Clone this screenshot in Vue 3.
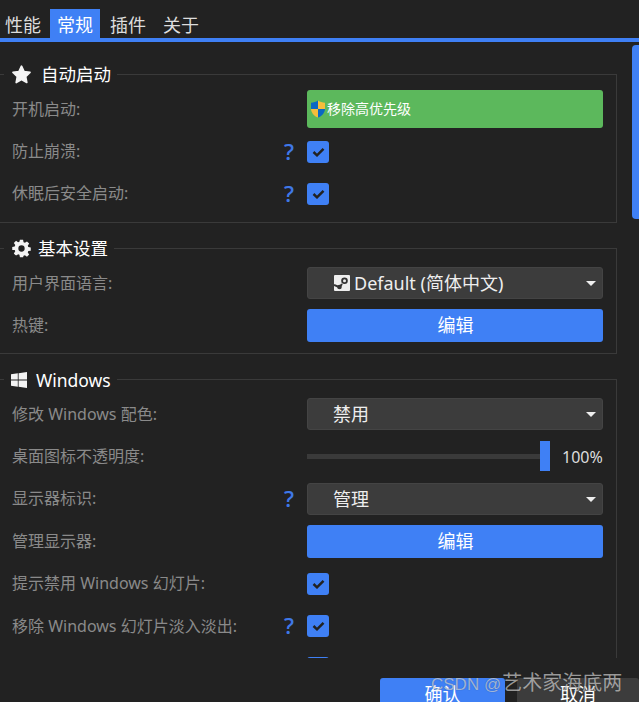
<script setup>
const startup = [
  { label: '防止崩溃:', help: true },
  { label: '休眠后安全启动:', help: true }
]
</script>

<template>
  <div class="page">
    <nav class="tabs">
      <span class="tab">性能</span>
      <span class="tab active">常规</span>
      <span class="tab">插件</span>
      <span class="tab">关于</span>
    </nav>

    <main class="content">
      <fieldset class="group first">
        <legend>
          <svg class="gi star" viewBox="0 0 24 24"><path fill="#f4f4f4" stroke="#f4f4f4" stroke-width="2" stroke-linejoin="round" d="M12 2.500l2.900 6.300 6.800.8-5 4.700 1.300 6.800-6-3.400-6 3.400 1.300-6.800-5-4.700 6.800-.8z"/></svg>
          <span>自动启动</span>
        </legend>
        <div class="row">
          <span class="label">开机启动:</span>
          <span></span>
          <div class="btn green">
            <svg class="shield" viewBox="0 0 16 18">
              <path fill="#0a68c4" d="M8 0.600C6 2 3.600 2.700 1 2.800v6.100H8z"/>
              <path fill="#f6bd3b" d="M8 0.600c2 1.400 4.400 2.100 7 2.200v6.100H8z"/>
              <path fill="#f6bd3b" d="M1 8.900C1.300 13 4 16 8 17.400V8.900z"/>
              <path fill="#0a68c4" d="M15 8.900C14.700 13 12 16 8 17.400V8.900z"/>
            </svg>
            <span>移除高优先级</span>
          </div>
        </div>
        <div v-for="item in startup" :key="item.label" class="row">
          <span class="label">{{ item.label }}</span>
          <span class="help">?</span>
          <span class="check"><svg viewBox="0 0 13 10"><path d="M1.500 5l3.500 3.300 6.500-6.500" /></svg></span>
        </div>
      </fieldset>

      <fieldset class="group">
        <legend>
          <svg class="gi gear" viewBox="0 0 24 24"><path fill="#f4f4f4" fill-rule="evenodd" d="M10 1h4l.6 3.100 1.700.7 2.600-1.800 2.800 2.800-1.800 2.600.7 1.700 3.100.6v4l-3.100.6-.7 1.700 1.800 2.600-2.800 2.800-2.600-1.800-1.700.7L14 23h-4l-.6-3.100-1.700-.7-2.600 1.800-2.800-2.800 1.800-2.600-.7-1.700L.3 14v-4l3.100-.6.7-1.700L2.300 5.100 5.100 2.300l2.600 1.800 1.700-.7zM12 8a4 4 0 100 8 4 4 0 000-8z"/></svg>
          <span>基本设置</span>
        </legend>
        <div class="row">
          <span class="label">用户界面语言:</span>
          <span></span>
          <div class="select">
            <svg class="steam" viewBox="0 0 16 16">
              <rect width="16" height="16" rx="1" fill="#eee"/>
              <circle cx="10.500" cy="5.800" r="3.300" fill="#333"/>
              <circle cx="10.500" cy="5.800" r="1.500" fill="#eee"/>
              <path d="M0 10l5.500 2.200L8 9" fill="none" stroke="#333" stroke-width="2"/>
              <circle cx="5.500" cy="12" r="2.300" fill="#333"/>
            </svg>
            <span>Default (简体中文)</span>
            <i class="caret"></i>
          </div>
        </div>
        <div class="row">
          <span class="label">热键:</span>
          <span></span>
          <div class="btn blue">编辑</div>
        </div>
      </fieldset>

      <fieldset class="group third">
        <legend>
          <svg class="gi win" viewBox="0 0 16 16"><path fill="#f4f4f4" d="M0 2.300l6.800-1v6.300H0zM7.600 1.200L16 0v7.600H7.600zM0 8.400h6.800v6.300l-6.800-1zM7.600 8.400H16V16l-8.400-1.200z"/></svg>
          <span>Windows</span>
        </legend>
        <div class="row">
          <span class="label">修改 Windows 配色:</span>
          <span></span>
          <div class="select plain"><span>禁用</span><i class="caret"></i></div>
        </div>
        <div class="row">
          <span class="label">桌面图标不透明度:</span>
          <span></span>
          <div class="slider">
            <div class="track"><i class="thumb"></i></div>
            <span class="pct">100%</span>
          </div>
        </div>
        <div class="row">
          <span class="label">显示器标识:</span>
          <span class="help">?</span>
          <div class="select plain"><span>管理</span><i class="caret"></i></div>
        </div>
        <div class="row">
          <span class="label">管理显示器:</span>
          <span></span>
          <div class="btn blue">编辑</div>
        </div>
        <div class="row">
          <span class="label">提示禁用 Windows 幻灯片:</span>
          <span></span>
          <span class="check"><svg viewBox="0 0 13 10"><path d="M1.500 5l3.500 3.300 6.500-6.500" /></svg></span>
        </div>
        <div class="row">
          <span class="label">移除 Windows 幻灯片淡入淡出:</span>
          <span class="help">?</span>
          <span class="check"><svg viewBox="0 0 13 10"><path d="M1.500 5l3.500 3.300 6.500-6.500" /></svg></span>
        </div>
        <div class="row">
          <span class="label"></span>
          <span></span>
          <span class="check"></span>
        </div>
      </fieldset>

      <div class="scroll-thumb"></div>
    </main>

    <footer class="actions">
      <div class="action confirm">确认</div>
      <div class="action cancel">取消</div>
    </footer>

    <div class="watermark"><span class="wm-latin">CSDN @</span>艺术家海底两</div>
  </div>
</template>

<style>
html, body { margin: 0; height: 100%; overflow: hidden; background: #222; }
</style>

<style scoped>
.page {
  position: relative;
  width: 639px;
  height: 702px;
  overflow: hidden;
  background: #222;
  color: #eee;
  font-family: "Noto Sans", "Noto Sans CJK SC", sans-serif;
}
.tabs {
  display: flex;
  box-sizing: border-box;
  height: 42px;
  padding-top: 9px;
  border-bottom: 4px solid #3f80f5;
}
.tab {
  box-sizing: border-box;
  padding: 0 5px;
  height: 29px;
  font-size: 18px;
  line-height: 32px;
  color: #ddd;
  white-space: nowrap;
  overflow: hidden;
}
.tab:first-child { margin-right: 4px; }
.tab.active { width: 50px; padding: 0 7px; margin-right: 5px; background: #3f80f5; color: #fff; }
.tab:nth-child(4) { margin-left: 7px; }

.content {
  position: relative;
  box-sizing: border-box;
  height: 616px;
  padding-top: 19px;
  overflow: hidden;
}
.group {
  box-sizing: border-box;
  width: 618px;
  margin: 0 0 13px -1px;
  padding: 1px 13px 6px 13px;
  border: 1px solid #3a3a3a;
  min-inline-size: 0;
}
.group.first { padding-bottom: 7px; margin-bottom: 12px; }
.group.third { padding-top: 0; }
legend {
  display: flex;
  align-items: center;
  height: 26px;
  margin-left: -9px;
  padding: 0 6px 0 8px;
  font-size: 17.500px;
  color: #fff;
  line-height: 26px;
}
.gi { flex: none; }
.star { width: 21px; height: 21px; margin: 0 9px 0 -1px; }
.gear { width: 19px; height: 19px; margin: 0 7px 0 0; }
.win { width: 16px; height: 16px; margin: 0 9px 0 -1px; }

.row {
  display: grid;
  grid-template-columns: 1fr 36px 296px;
  align-items: center;
  height: 42.400px;
}
.label {
  font-size: 16px;
  color: #8a8a8a;
  white-space: nowrap;
  margin-left: -1px;
  padding-bottom: 3px;
}
.help {
  font-family: "Open Sans", sans-serif;
  font-size: 22px;
  font-weight: 600;
  color: #3f78e8;
  text-align: center;
  line-height: 1;
  padding-bottom: 2px;
}
.btn {
  box-sizing: border-box;
  display: flex;
  align-items: center;
  border-radius: 3px;
  color: #fff;
}
.green {
  height: 38px;
  padding: 0 0 3px 3px;
  background: #5cb85c;
  font-size: 14px;
}
.shield { width: 16px; height: 18px; flex: none; margin: 3px 1px 0 0; }
.blue {
  height: 33px;
  padding: 0 0 3px 1px;
  justify-content: center;
  background: #3f80f5;
  font-size: 18px;
}
.check {
  display: flex;
  align-items: center;
  justify-content: center;
  box-sizing: border-box;
  width: 22px;
  height: 22px;
  border-radius: 3px;
  background: #3f80f5;
}
.check svg { width: 13px; height: 10px; }
.check path { fill: none; stroke: #222; stroke-width: 2.500; }
.select {
  position: relative;
  box-sizing: border-box;
  display: flex;
  align-items: center;
  height: 32px;
  padding: 0 0 2px 26px;
  background: #3c3c3c;
  border: 1px solid #444;
  border-radius: 3px;
  font-size: 18px;
  color: #eee;
}
.select.plain { padding-left: 25px; }
.steam { width: 16px; height: 16px; margin: 2px 4px 0 0; flex: none; }
.caret {
  position: absolute;
  right: 6px;
  top: 13px;
  border-left: 5px solid transparent;
  border-right: 5px solid transparent;
  border-top: 5px solid #eee;
}
.slider { display: flex; align-items: center; }
.track {
  position: relative;
  width: 243px;
  height: 5px;
  background: #3a3a3a;
}
.thumb {
  position: absolute;
  right: 0;
  top: -13px;
  width: 10px;
  height: 30px;
  background: #3f80f5;
}
.pct { margin-left: 12px; font-size: 16px; color: #ddd; white-space: nowrap; }

.scroll-thumb {
  position: absolute;
  right: 0;
  top: 3px;
  width: 7px;
  height: 174px;
  border-radius: 4px 0 0 4px;
  background: #3f80f5;
}

.actions {
  display: flex;
  gap: 12px;
  margin-top: 20px;
  padding-left: 380px;
  height: 24px;
  overflow: hidden;
}
.action {
  flex: none;
  height: 33px;
  font-size: 18px;
  line-height: 33px;
  text-align: center;
  color: #fff;
  border-radius: 3px 3px 0 0;
}
.confirm { width: 125px; background: #3f80f5; }
.cancel { width: 122px; background: #3c3c3c; }

.watermark {
  position: absolute;
  left: 431px;
  top: 669px;
  font-size: 20px;
  line-height: 28px;
  white-space: nowrap;
  color: rgba(255, 255, 255, 0.56);
  text-shadow: 0 0 1px rgba(0, 0, 0, 0.4);
  font-family: "Liberation Sans", "Noto Sans CJK SC", sans-serif;
}
.wm-latin { font-size: 17px; margin-right: 1px; }
</style>
